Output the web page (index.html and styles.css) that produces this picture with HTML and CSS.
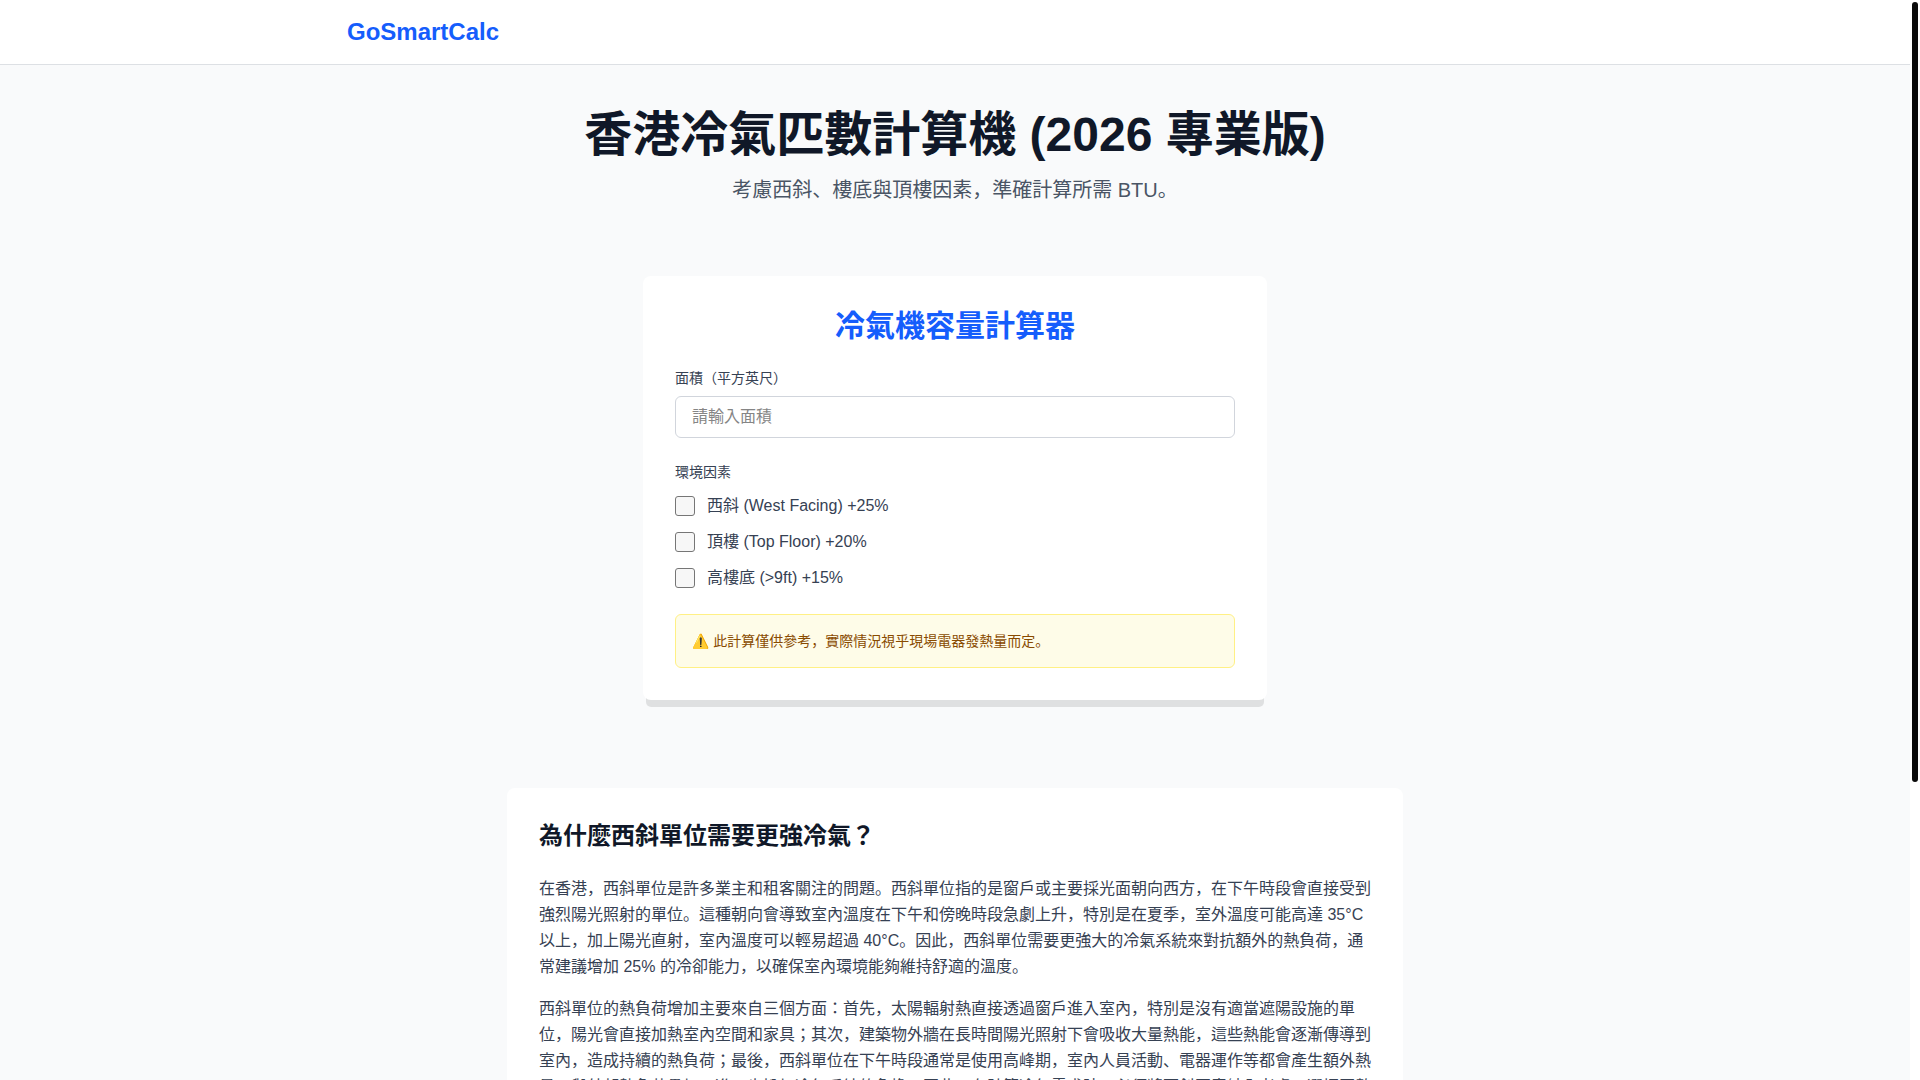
FILE: index.html
```html
<!DOCTYPE html>
<html lang="zh-HK">
<head>
<meta charset="utf-8">
<meta name="viewport" content="width=device-width, initial-scale=1">
<title>香港冷氣匹數計算機 (2026 專業版)</title>
<link rel="stylesheet" href="styles.css">
</head>
<body>
<div class="viewport">
  <div class="page">
    <header class="site-header">
      <nav class="site-nav"><a class="brand" href="#">GoSmartCalc</a></nav>
    </header>
    <main class="main">
      <div class="hero">
        <h1 class="hero-title">香港冷氣匹數計算機 (2026 專業版)</h1>
        <p class="hero-subtitle">考慮西斜、樓底與頂樓因素，準確計算所需 BTU。</p>
      </div>
      <form class="card calculator">
        <h2 class="calculator-title">冷氣機容量計算器</h2>
        <div class="field">
          <label class="field-label" for="area">面積（平方英尺）</label>
          <input class="field-input" id="area" type="text" inputmode="numeric" placeholder="請輸入面積">
        </div>
        <fieldset class="factors">
          <legend class="field-label factors-label">環境因素</legend>
          <label class="factor"><input class="factor-box" type="checkbox">西斜 (West Facing) +25%</label>
          <label class="factor"><input class="factor-box" type="checkbox">頂樓 (Top Floor) +20%</label>
          <label class="factor"><input class="factor-box" type="checkbox">高樓底 (&gt;9ft) +15%</label>
        </fieldset>
        <p class="notice">⚠️ 此計算僅供參考，實際情況視乎現場電器發熱量而定。</p>
      </form>
      <article class="card article">
        <h2 class="article-title">為什麼西斜單位需要更強冷氣？</h2>
        <p class="article-text">在香港，西斜單位是許多業主和租客關注的問題。西斜單位指的是窗戶或主要採光面朝向西方，在下午時段會直接受到強烈陽光照射的單位。這種朝向會導致室內溫度在下午和傍晚時段急劇上升，特別是在夏季，室外溫度可能高達 35°C 以上，加上陽光直射，室內溫度可以輕易超過 40°C。因此，西斜單位需要更強大的冷氣系統來對抗額外的熱負荷，通常建議增加 25% 的冷卻能力，以確保室內環境能夠維持舒適的溫度。</p>
        <p class="article-text">西斜單位的熱負荷增加主要來自三個方面：首先，太陽輻射熱直接透過窗戶進入室內，特別是沒有適當遮陽設施的單位，陽光會直接加熱室內空間和家具；其次，建築物外牆在長時間陽光照射下會吸收大量熱能，這些熱能會逐漸傳導到室內，造成持續的熱負荷；最後，西斜單位在下午時段通常是使用高峰期，室內人員活動、電器運作等都會產生額外熱量，與外部熱負荷疊加，進一步增加冷氣系統的負擔。因此，在計算冷氣需求時，必須將西斜因素納入考慮，選擇匹數更大的冷氣機。</p>
      </article>
    </main>
  </div>
  <div class="scroll-track" aria-hidden="true"><div class="scroll-thumb"></div></div>
</div>
</body>
</html>
```
FILE: styles.css
```css
*, *::before, *::after { box-sizing: border-box; }

body, h1, h2, p, fieldset, legend { margin: 0; padding: 0; }

body {
  color: #101828;
  background: #f9fafb;
  font-family: "Liberation Sans", "Noto Sans CJK JP", "Noto Color Emoji", sans-serif;
  font-size: 16px;
  line-height: 24px;
  font-feature-settings: "locl" 0;
}

.viewport {
  display: grid;
  grid-template-columns: minmax(0, 1fr) 10px;
  height: 100vh;
}

.page {
  min-height: 0;
  overflow-y: auto;
  scrollbar-width: none;
}

.scroll-track {
  padding: 2px;
  background: #fff;
}

.scroll-thumb {
  height: 72.5%;
  border-radius: 3px;
  background: #0a0a0a;
}

.site-header {
  border-bottom: 1px solid #dde0e4;
  background: #fff;
}

.site-nav {
  max-width: 1280px;
  margin: 0 auto;
  padding: 16px 32px;
}

.brand {
  display: inline-block;
  vertical-align: top;
  color: #155dfc;
  font-size: 24px;
  font-weight: 700;
  line-height: 32px;
  text-decoration: none;
}

.main {
  display: flex;
  flex-direction: column;
  align-items: center;
  padding: 40px 32px 64px;
}

.hero { text-align: center; }

.hero-title {
  margin-bottom: 10px;
  font-size: 48px;
  font-weight: 700;
  line-height: 60px;
}

.hero-subtitle {
  color: #4a5565;
  font-size: 20px;
  line-height: 30px;
}

.card {
  width: 100%;
  padding: 32px;
  border-radius: 8px;
  background: #fff;
}

.calculator {
  max-width: 624px;
  margin-top: 71px;
  box-shadow: 0 10px 0 -3px rgb(0 0 0 / 10%);
}

.calculator-title {
  margin-bottom: 24px;
  color: #155dfc;
  font-size: 30px;
  font-weight: 700;
  line-height: 36px;
  text-align: center;
}

.field { margin-bottom: 24px; }

.field-label {
  display: block;
  margin-bottom: 8px;
  color: #364153;
  font-size: 14px;
  line-height: 20px;
}

.field-input {
  display: block;
  width: 100%;
  height: 42px;
  padding: 8px 16px;
  border: 1px solid #d1d5dc;
  border-radius: 6px;
  background: #fff;
  color: #101828;
  font: inherit;
}

.field-input::placeholder { color: #858585; }

.factors {
  display: flex;
  flex-direction: column;
  gap: 12px;
  border: 0;
  margin-bottom: 24px;
}

.factors-label { margin-bottom: 12px; }

.factor {
  display: flex;
  align-items: center;
  gap: 12px;
  color: #364153;
}

.factor-box {
  appearance: none;
  width: 20px;
  height: 20px;
  margin: 0;
  border: 1px solid #767676;
  border-radius: 3px;
  background: #f7f7f7;
}

.factor-box:checked {
  border-color: #155dfc;
  background: #155dfc;
}

.notice {
  padding: 16px;
  border: 1px solid #fff085;
  border-radius: 6px;
  background: #fefce8;
  color: #894b00;
  font-size: 14px;
  line-height: 20px;
}

.article {
  max-width: 896px;
  margin-top: 88px;
}

.article-title {
  margin-bottom: 24px;
  font-size: 24px;
  font-weight: 700;
  line-height: 32px;
}

.article-text {
  margin-bottom: 16px;
  color: #364153;
  line-height: 26px;
}
```
